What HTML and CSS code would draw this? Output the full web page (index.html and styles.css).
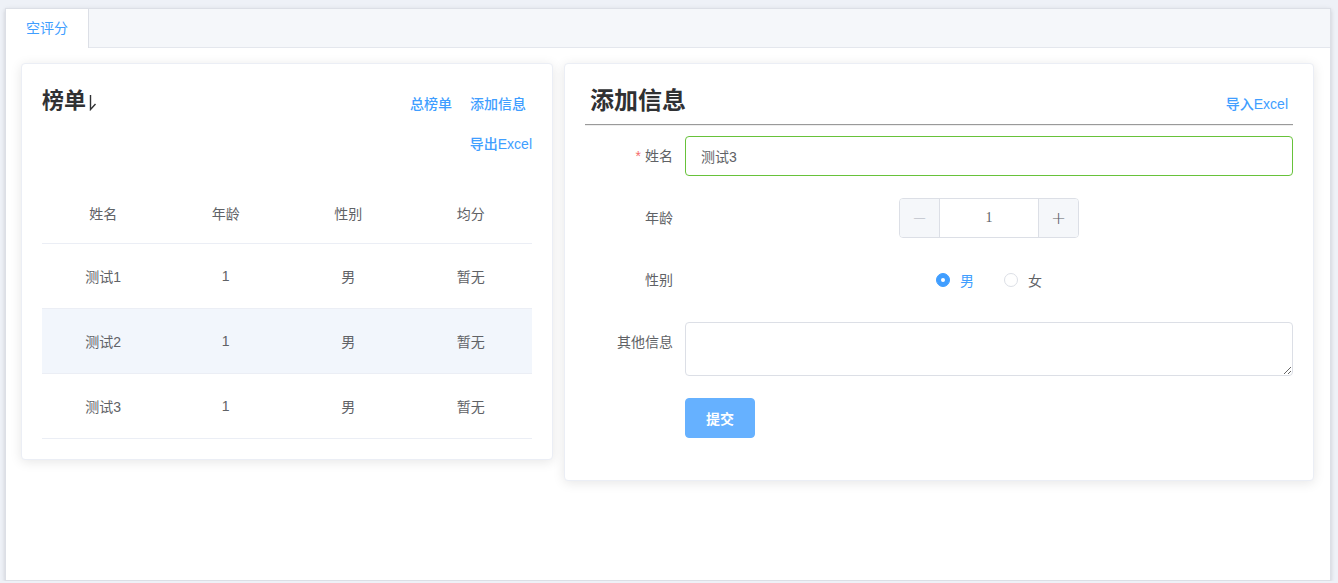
FILE: index.html
```html
<!DOCTYPE html>
<html lang="zh-CN">
<head>
<meta charset="utf-8">
<title>空评分</title>
<link rel="stylesheet" href="styles.css">
</head>
<body>
<div class="tabs">
  <div class="tabs-header">
    <div class="tab active">空评分</div>
  </div>
  <div class="tabs-content">
    <div class="card board">
      <div class="board-head">
        <h3 class="board-title">榜单<svg class="sort-icon" width="8" height="17" viewBox="0 0 8 17"><path d="M1.5 1 V15.5 L6.5 10" fill="none" stroke="#303133" stroke-width="1.4"/></svg></h3>
        <div class="board-actions">
          <div class="action-row">
            <button class="link">总榜单</button>
            <button class="link">添加信息</button>
          </div>
          <button class="link">导出Excel</button>
        </div>
      </div>
      <table class="rank">
        <thead>
          <tr><th>姓名</th><th>年龄</th><th>性别</th><th>均分</th></tr>
        </thead>
        <tbody>
          <tr><td>测试1</td><td>1</td><td>男</td><td>暂无</td></tr>
          <tr class="hover"><td>测试2</td><td>1</td><td>男</td><td>暂无</td></tr>
          <tr><td>测试3</td><td>1</td><td>男</td><td>暂无</td></tr>
        </tbody>
      </table>
    </div>
    <div class="card form-card">
      <div class="form-head">
        <h2 class="form-title">添加信息</h2>
        <button class="link import">导入Excel</button>
      </div>
      <hr class="divider">
      <form class="form">
        <div class="form-item">
          <label class="label"><span class="req">*</span>姓名</label>
          <div class="control">
            <input class="input success" type="text" value="测试3">
          </div>
        </div>
        <div class="form-item">
          <label class="label">年龄</label>
          <div class="control centered">
            <div class="number">
              <span class="num-btn dec">−</span>
              <input class="num-input" type="text" value="1">
              <span class="num-btn inc">+</span>
            </div>
          </div>
        </div>
        <div class="form-item">
          <label class="label">性别</label>
          <div class="control centered">
            <div class="radios">
              <label class="radio checked"><span class="radio-dot"></span><span class="radio-text">男</span></label>
              <label class="radio"><span class="radio-dot"></span><span class="radio-text">女</span></label>
            </div>
          </div>
        </div>
        <div class="form-item">
          <label class="label">其他信息</label>
          <div class="control">
            <textarea class="textarea"></textarea>
          </div>
        </div>
        <div class="form-item">
          <div class="label"></div>
          <div class="control">
            <button type="button" class="submit">提交</button>
          </div>
        </div>
      </form>
    </div>
  </div>
</div>
</body>
</html>
```

FILE: styles.css
```css
* { box-sizing: border-box; }

html, body {
  margin: 0;
  background: #eef1f7;
}

body {
  padding: 8px 7px 0 5px;
  font-family: "Liberation Sans", "Noto Sans CJK SC", sans-serif;
  font-size: 14px;
  color: #606266;
}

.tabs {
  height: 573px;
  background: #fff;
  border: 1px solid #dcdfe6;
  box-shadow: 0 2px 4px 0 rgba(0, 0, 0, .12), 0 0 6px 0 rgba(0, 0, 0, .04);
}

.tabs-header {
  display: flex;
  height: 39px;
  background: #f5f7fa;
  border-bottom: 1px solid #e4e7ed;
}

.tab {
  height: 39px;
  line-height: 38px;
  padding: 0 20px;
  font-size: 14px;
  color: #909399;
}

.tab.active {
  background: #fff;
  color: #409eff;
  border-right: 1px solid #dcdfe6;
}

.tabs-content {
  padding: 15px;
  display: grid;
  grid-template-columns: 532px 750px;
  column-gap: 11px;
  align-items: start;
}

.card {
  background: #fff;
  border: 1px solid #ebeef5;
  border-radius: 4px;
  box-shadow: 0 2px 12px 0 rgba(0, 0, 0, .1);
  padding: 20px;
}

.link {
  background: none;
  border: 0;
  padding: 0;
  height: 40px;
  line-height: 40px;
  font-family: inherit;
  font-size: 14px;
  font-weight: 500;
  color: #409eff;
  cursor: pointer;
}

/* left card */
.board-head {
  display: flex;
  justify-content: space-between;
  align-items: flex-start;
}

.board-title {
  margin: 0;
  font-size: 22px;
  line-height: 34px;
  font-weight: 700;
  color: #303133;
  display: flex;
  align-items: center;
}

.sort-icon {
  margin-left: 3px;
  margin-top: 2px;
}

.board-actions {
  display: flex;
  flex-direction: column;
  align-items: flex-end;
}

.action-row {
  display: flex;
  gap: 18px;
  margin-right: 6px;
}

.rank {
  width: 100%;
  margin-top: 19px;
  border-collapse: collapse;
  table-layout: fixed;
  font-size: 14px;
  color: #606266;
}

.rank th {
  height: 60px;
  font-weight: 400;
  color: #606266;
  border-bottom: 1px solid #ebeef5;
  text-align: center;
}

.rank td {
  height: 65px;
  text-align: center;
  border-bottom: 1px solid #ebeef5;
}

.rank tr.hover td {
  background: #f2f6fc;
}

/* right card */
.form-head {
  display: flex;
  justify-content: space-between;
  align-items: flex-start;
  height: 40px;
}

.form-title {
  margin: 0 0 0 5px;
  font-size: 24px;
  line-height: 34px;
  font-weight: 700;
  color: #303133;
}

.import {
  margin-right: 5px;
}

.divider {
  margin: 0 0 10px;
  border: 0;
  border-top: 1px solid #9a9a9a;
  border-bottom: 1px solid #eeeeee;
}

.form-item {
  display: flex;
  margin-bottom: 22px;
}

.label {
  flex: 0 0 100px;
  text-align: right;
  padding-right: 12px;
  line-height: 40px;
  font-size: 14px;
  color: #606266;
}

.req {
  color: #f56c6c;
  margin-right: 4px;
}

.control {
  flex: 1;
  min-width: 0;
}

.control.centered {
  display: flex;
  justify-content: center;
}

.input {
  display: block;
  width: 100%;
  height: 40px;
  padding: 0 15px;
  border: 1px solid #dcdfe6;
  border-radius: 4px;
  font-family: inherit;
  font-size: 14px;
  color: #606266;
  outline: none;
}

.input.success {
  border-color: #67c23a;
}

.number {
  display: flex;
  width: 180px;
  height: 40px;
  border: 1px solid #dcdfe6;
  border-radius: 4px;
  overflow: hidden;
}

.num-btn {
  flex: 0 0 40px;
  background: #f5f7fa;
  color: #606266;
  text-align: center;
  line-height: 38px;
  font-size: 18px;
  font-family: "DejaVu Sans", sans-serif;
  font-weight: 300;
}

.num-btn.dec {
  border-right: 1px solid #dcdfe6;
  color: #c0c4cc;
}

.num-btn.inc {
  border-left: 1px solid #dcdfe6;
}

.num-input {
  flex: 1;
  min-width: 0;
  border: 0;
  text-align: center;
  font-family: "Liberation Serif", serif;
  font-size: 14px;
  color: #606266;
  outline: none;
  padding: 0;
}

.radios {
  display: flex;
  align-items: center;
  height: 40px;
}

.radio {
  display: flex;
  align-items: center;
  margin-right: 30px;
  font-size: 14px;
  color: #606266;
}

.radio:last-child {
  margin-right: 0;
}

.radio-dot {
  width: 14px;
  height: 14px;
  border-radius: 50%;
  border: 1px solid #dcdfe6;
  background: #fff;
  display: flex;
  align-items: center;
  justify-content: center;
}

.radio.checked .radio-dot {
  background: #409eff;
  border-color: #409eff;
}

.radio.checked .radio-dot::after {
  content: "";
  width: 4px;
  height: 4px;
  border-radius: 50%;
  background: #fff;
}

.radio-text {
  padding-left: 10px;
}

.radio.checked .radio-text {
  color: #409eff;
}

.textarea {
  display: block;
  width: 100%;
  height: 54px;
  padding: 5px 15px;
  border: 1px solid #dcdfe6;
  border-radius: 4px;
  resize: vertical;
  font-family: inherit;
  font-size: 14px;
  color: #606266;
  outline: none;
}

.submit {
  height: 40px;
  padding: 0 20px;
  background: #66b1ff;
  border: 1px solid #66b1ff;
  border-radius: 4px;
  color: #fff;
  font-family: inherit;
  font-size: 14px;
  font-weight: 700;
  cursor: pointer;
}
```
